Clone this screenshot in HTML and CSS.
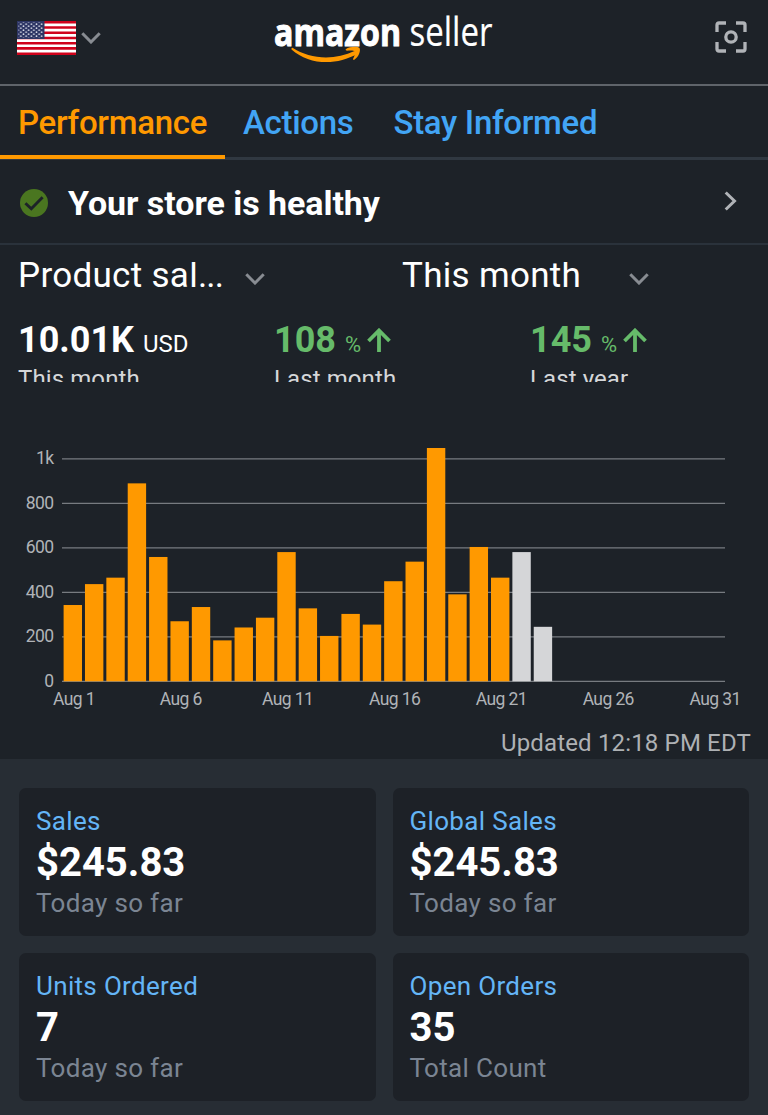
FILE: index.html
```
<!DOCTYPE html>
<html lang="en">
<head>
  <meta charset="UTF-8" />
  <meta name="viewport" content="width=device-width, initial-scale=1.0" />
  <title>Amazon Seller</title>
  <link rel="stylesheet" href="styles.css">
</head>
<body>
  <header class="topbar">
    <div class="country">
      <svg class="flag" width="59" height="34" viewBox="0 0 59 34">
        <defs>
          <pattern id="stars" width="5.2" height="4" patternUnits="userSpaceOnUse">
            <circle cx="1.3" cy="1.2" r="0.85" fill="#d5d8e4" />
            <circle cx="3.9" cy="3.2" r="0.85" fill="#d5d8e4" />
          </pattern>
        </defs>
        <rect width="59" height="34" fill="#fff" />
        <path d="M0 1.3H59M0 6.5H59M0 11.7H59M0 17H59M0 22.2H59M0 27.4H59M0 32.7H59" stroke="#d0021b" stroke-width="2.6" />
        <rect width="27.5" height="18" fill="#2d3564" />
        <rect x="1.5" y="1.5" width="24.5" height="15" fill="url(#stars)" />
      </svg>
      <svg class="chevron" width="20" height="12" viewBox="0 0 20 12"><path d="M1.3 1.3L10 10L18.7 1.3" /></svg>
    </div>

    <svg class="logo" width="220" height="84" viewBox="0 0 220 84">
      <text class="logo-amazon" x="0" y="45.5" textLength="127" lengthAdjust="spacingAndGlyphs">amazon</text>
      <text class="logo-seller" x="135.5" y="45.5" textLength="83" lengthAdjust="spacingAndGlyphs">seller</text>
      <path class="smile" d="M18.5 47.8C36 59.5 61 60.5 80.5 51L83.5 53.8C62 66 35 65 17.5 49.4Q17 47.7 18.5 47.8Z" />
      <path class="smile" d="M71.6 49.3C76 46.5 83.5 46.2 85.5 48C87 51 84.5 57 80.3 59.8C79 60 78.8 59.5 79.2 58.5C80.5 56 81.5 52.8 80.7 51.4C79.5 50 75.5 50.4 73 50.8Q71.5 50.5 71.6 49.3Z" />
    </svg>

    <svg class="scan" width="32" height="32" viewBox="0 0 32 32">
      <path d="M2 11V4Q2 2 4 2H11M21 2H28Q30 2 30 4V11M30 21V28Q30 30 28 30H21M11 30H4Q2 30 2 28V21" />
      <circle cx="16" cy="16" r="5.2" />
    </svg>
  </header>

  <nav class="tabs">
    <a class="tab active">Performance</a>
    <a class="tab">Actions</a>
    <a class="tab">Stay Informed</a>
  </nav>

  <section class="health">
    <svg width="28" height="28" viewBox="0 0 28 28">
      <circle cx="14" cy="14" r="14" fill="#4a7620" />
      <path d="M5.4 14.2L11.3 19.8L22.6 8.2" fill="none" stroke="#1d2228" stroke-width="2.9" />
    </svg>
    <span class="health-text">Your store is healthy</span>
    <svg class="arrow-right" width="14" height="20" viewBox="0 0 14 20"><path d="M1.7 1.5L10.5 10L1.7 18.5" /></svg>
  </section>

  <section class="filters">
    <div class="filter">
      <span class="filter-name">Product sal<span class="dots">...</span></span>
      <svg class="chevron" width="20" height="12" viewBox="0 0 20 12"><path d="M1.3 1.3L10 10L18.7 1.3" /></svg>
    </div>
    <div class="filter">
      <span class="filter-name">This month</span>
      <svg class="chevron" width="20" height="12" viewBox="0 0 20 12"><path d="M1.3 1.3L10 10L18.7 1.3" /></svg>
    </div>
  </section>

  <section class="metrics">
    <div class="metric">
      <div class="amount">10.01K <span class="unit">USD</span></div>
      <div class="period">This month</div>
    </div>
    <div class="metric">
      <div class="amount up">108 <span class="percent">%</span><svg width="24" height="24" viewBox="0 0 24 24"><path d="M12 24V2.5M1.5 13L12 2.5L22.5 13" /></svg></div>
      <div class="period">Last month</div>
    </div>
    <div class="metric">
      <div class="amount up">145 <span class="percent">%</span><svg width="24" height="24" viewBox="0 0 24 24"><path d="M12 24V2.5M1.5 13L12 2.5L22.5 13" /></svg></div>
      <div class="period">Last year</div>
    </div>
  </section>

  <svg id="chart" class="chart" width="768" height="338" viewBox="0 0 768 338"></svg>
  <p class="updated">Updated 12:18 PM EDT</p>

  <main class="cards">
    <div class="card">
      <h2>Sales</h2>
      <strong>$245.83</strong>
      <p>Today so far</p>
    </div>
    <div class="card">
      <h2>Global Sales</h2>
      <strong>$245.83</strong>
      <p>Today so far</p>
    </div>
    <div class="card">
      <h2>Units Ordered</h2>
      <strong>7</strong>
      <p>Today so far</p>
    </div>
    <div class="card">
      <h2>Open Orders</h2>
      <strong>35</strong>
      <p>Total Count</p>
    </div>
  </main>

  <script src="script.js"></script>
</body>
</html>
```
FILE: styles.css
```
* {
  box-sizing: border-box;
}
body {
  background-color: #1d2228;
  color: white;
  font-family: Roboto, sans-serif;
  margin: 0;
}

/* Top bar */
.topbar {
  display: grid;
  grid-template-columns: 1fr 220px 1fr;
  align-items: center;
  height: 86px;
  padding: 0 21px 0 17px;
  border-bottom: 2px solid #5f646a;
}
.country {
  display: flex;
  align-items: center;
  gap: 5px;
  margin-bottom: 9px;
}
.chevron path {
  fill: none;
  stroke: #888c92;
  stroke-width: 3;
}
.logo {
  align-self: start;
  margin-left: 2px;
  overflow: visible;
}
.logo text {
  font-family: "Open Sans", sans-serif;
  fill: white;
  stroke: white;
}
.logo .logo-amazon {
  font-size: 38px;
  font-weight: 700;
  stroke-width: 1;
}
.logo .logo-seller {
  font-size: 40px;
  font-weight: 400;
  stroke-width: 0.2;
}
.smile {
  fill: #ff9900;
}
.scan {
  justify-self: end;
  margin-bottom: 11px;
}
.scan path, .scan circle {
  fill: none;
  stroke: #b0b3b7;
  stroke-width: 3.3;
}

/* Tabs */
.tabs {
  display: flex;
  height: 74px;
  border-bottom: 3px solid #303841;
}
.tab {
  height: 73px;
  padding: 17px 18px 0;
  color: #42a5f5;
  font-size: 33px;
  font-weight: 500;
  line-height: 40px;
  letter-spacing: -0.3px;
}
.tab + .tab {
  padding-right: 22px;
}
.tab.active {
  width: 225px;
  color: #ff9900;
  border-bottom: 4px solid #ff9900;
}

/* Store health */
.health {
  display: flex;
  align-items: center;
  height: 85px;
  padding: 2px 30px 0 20px;
  border-bottom: 2px solid #2a323b;
}
.health-text {
  flex: 1;
  padding-left: 20px;
  font-size: 34px;
  font-weight: 700;
  letter-spacing: -0.05px;
}
.arrow-right {
  margin-bottom: 4px;
}
.arrow-right path {
  fill: none;
  stroke: #b0b3b7;
  stroke-width: 3;
}

/* Filters, the names are cut off at the top */
.filters {
  display: grid;
  grid-template-columns: 1fr 1fr;
  padding-top: 17px;
}
.filter {
  display: flex;
  align-items: center;
  height: 36px;
  padding-left: 18px;
}
.filter-name {
  width: 227px;
  height: 36px;
  overflow: hidden;
  font-size: 35px;
  line-height: 27px;
  letter-spacing: 0.3px;
  white-space: nowrap;
}
.dots {
  letter-spacing: -0.9px;
}
.filter .chevron {
  margin-bottom: 2px;
}

/* Metrics */
.metrics {
  display: grid;
  grid-template-columns: repeat(3, 256px);
  height: 84px;
  padding-top: 21px;
  overflow: hidden;
}
.metric {
  padding-left: 18px;
}
.amount {
  height: 46px;
  font-size: 36px;
  font-weight: 700;
  line-height: 42px;
  white-space: nowrap;
}
.unit {
  font-size: 24px;
  font-weight: 400;
}
.up {
  color: #66bb6a;
}
.percent {
  font-size: 22px;
  font-weight: 400;
}
.up svg {
  margin-left: 6px;
}
.up path {
  fill: none;
  stroke: #66bb6a;
  stroke-width: 3.8;
}
.period {
  color: #d5d7d9;
  font-size: 24px;
  line-height: 28px;
  letter-spacing: 0.1px;
}

/* Chart */
.chart {
  display: block;
}
.chart line {
  stroke: #777b80;
  stroke-width: 1.3;
}
.chart text {
  fill: #b0b3b7;
  font-size: 17.5px;
  letter-spacing: -0.6px;
}
.bar {
  fill: #ff9900;
}
.bar.pending {
  fill: #d5d6d8;
}
.updated {
  height: 39px;
  margin: 0;
  padding: 8px 17px 0 0;
  color: #aeb1b4;
  font-size: 24px;
  line-height: 30px;
  letter-spacing: 0.16px;
  text-align: right;
}

/* Cards */
.cards {
  display: grid;
  grid-template-columns: 1fr 1fr;
  grid-auto-rows: 148px;
  gap: 17px;
  height: 356px;
  padding: 29px 19px 0;
  background-color: #272d34;
}
.card {
  padding: 16px 17px;
  background-color: #1d2127;
  border-radius: 7px;
}
.card h2 {
  margin: 0;
  color: #64b5f6;
  font-size: 26px;
  font-weight: 400;
  line-height: 34px;
  letter-spacing: 0.33px;
}
.card strong {
  display: block;
  height: 48px;
  font-size: 40px;
  font-weight: 700;
  line-height: 50px;
}
.card p {
  margin: 0;
  color: #7b8593;
  font-size: 26px;
  line-height: 34px;
  letter-spacing: 0.33px;
}
```
FILE: script.js
```
const sales = [
  343, 437, 466, 890, 559, 270, 334, 184, 242, 286, 581, 328, 204, 303, 255,
  450, 538, 1049, 391, 604, 466, 581, 245
];
const chart = document.getElementById('chart');
const bottom = 299.3;
const scale = 0.2224;
const left = 63.6;
const step = 21.37;

let svg = '';

// grid lines and y axis labels
for (let value = 0; value <= 1000; value += 200) {
  const y = bottom - value * scale;
  svg += `<line x1="62" x2="725" y1="${y}" y2="${y}" />`;
  svg += `<text x="53.5" y="${y + 5.5}" text-anchor="end">${value === 1000 ? '1k' : value}</text>`;
}

// the last two days are still pending
sales.forEach((value, i) => {
  const height = value * scale;
  const name = i > 20 ? 'bar pending' : 'bar';
  svg += `<rect class="${name}" x="${left + i * step}" y="${bottom - height}" width="18.4" height="${height}" />`;
});

// x axis labels
for (let day = 1; day <= 31; day += 5) {
  const x = 74 + (day - 1) * step;
  svg += `<text x="${x}" y="322.5" text-anchor="middle">Aug ${day}</text>`;
}

chart.innerHTML = svg;
```
